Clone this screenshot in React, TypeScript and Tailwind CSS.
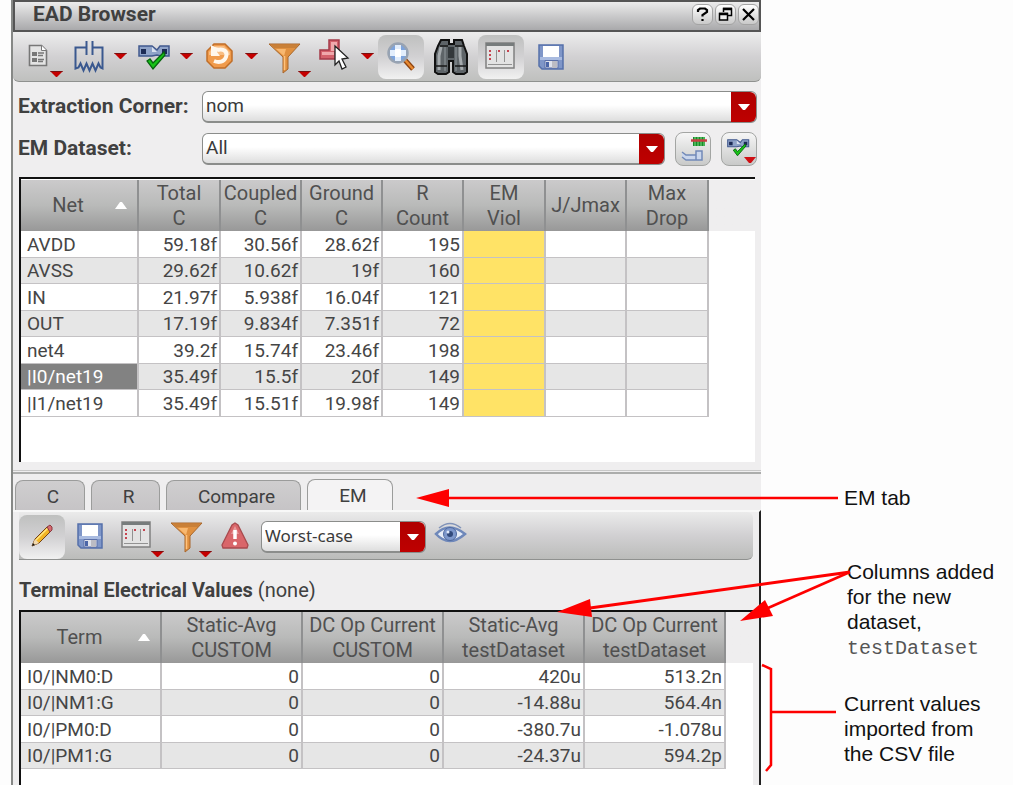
import React from "react";

type IconProps = { w: number; children: React.ReactNode };

function Glyph({ w, children }: IconProps) {
  return (
    <svg width={w} height={44} viewBox={`0 0 ${w} 44`} aria-hidden="true">
      {children}
    </svg>
  );
}

function Caret({ x, y }: { x: number; y: number }) {
  return (
    <g>
      <path d={`M${x} ${y}h13l-6 6h-1z`} fill="#c40000" />
      <path d={`M${x} ${y}h13l-1 1h-11z`} fill="#7a1010" />
    </g>
  );
}

function Floppy({ x, y }: { x: number; y: number }) {
  return (
    <g transform={`translate(${x} ${y})`}>
      <path d="M1 1h24v24h-21l-3-3z" fill="#7f96c8" stroke="#5670aa" strokeWidth="1.500" />
      <path d="M5 2h16v11h-16z" fill="#fff" />
      <path d="M2 13h22v3h-22z" fill="#a9bbe0" />
      <path d="M7 16.500h13v7.500h-13z" fill="#dfe2ec" stroke="#5c70a8" />
      <path d="M8 18h3v5h-3z" fill="#4b66a8" />
      <path d="M14 17h5v7h-5z" fill="#bcbcc4" />
    </g>
  );
}

function Funnel({ x, y }: { x: number; y: number }) {
  return (
    <g transform={`translate(${x} ${y})`}>
      <path d="M0 1h31l-12 13v12l-5 4v-16z" fill="#e0903f" stroke="#a8672c" />
      <path d="M2 2h27l-2 3h-22z" fill="#c98038" />
      <path d="M7 6h10l-2 7z" fill="#f8b870" />
      <path d="M15.500 13v14" stroke="#ffc27c" strokeWidth="1.500" />
    </g>
  );
}

function FormWindow({ x, y }: { x: number; y: number }) {
  return (
    <g transform={`translate(${x} ${y})`}>
      <rect x="1" y="1" width="28" height="25" fill="#e3e3e3" stroke="#808080" strokeWidth="1.5" />
      <path d="M1 2.500h28" stroke="#777c7c" strokeWidth="3" />
      <path d="M11.500 8v12M19.500 8v12M3 22.500h24" stroke="#929292" fill="none" />
      <path d="M4 8h2v2h-2zM4 12h2v2h-2zM4 16h2v2h-2zM13 8h2v2h-2zM22 8h2v2h-2z" fill="#c64450" />
    </g>
  );
}

function LayoutCheck({ x, y, s }: { x: number; y: number; s: number }) {
  return (
    <g transform={`translate(${x} ${y}) scale(${s})`}>
      <path
        d="M1 1h13l5 4 3-4h9v10h-8l-4-1-5 1h-13z"
        fill="#8fa3c8"
        stroke="#42598e"
        strokeWidth="1.5"
      />
      <path d="M14 2l5 5h-5z" fill="#d9e1f0" />
      <path d="M3 4h5v5h-5zM24 4h5v5h-5z" fill="#1c2b55" />
      <path d="M9 16l3-2 3 4 11-11 1 3-12 14z" fill="#18c218" stroke="#08650f" strokeWidth="1.3" />
    </g>
  );
}

const docIcon = (
  <Glyph w={42}>
    <path d="M5.500 10.500h12l5 5v15h-17z" fill="#e4e4e4" stroke="#777" strokeWidth="1.6" />
    <path d="M17.500 10.500v5h5" fill="#fff" stroke="#777" />
    <path d="M8 17h5v4h-5zM8 23h5v4h-5z" fill="#777" />
    <path d="M14 18h6M14 20.500h5M14 24.500h6M14 26.500h5" stroke="#777" strokeWidth="1.4" />
    <Caret x={26} y={36} />
  </Glyph>
);

const rcIcon = (
  <Glyph w={60}>
    <path
      d="M16.500 6v14M22.500 6v14M16.500 12.500h-11v21l3-1 2-4 3 7 3-7 3 7 3-7 3 7 3-7 2 4 2 1v-21h-10"
      fill="none"
      stroke="#3a588f"
      strokeWidth="2"
    />
    <Caret x={44} y={18} />
  </Glyph>
);

const checkIcon = (
  <Glyph w={62}>
    <LayoutCheck x={4} y={10} s={1} />
    <Caret x={46} y={18} />
  </Glyph>
);

const undoIcon = (
  <Glyph w={60}>
    <path d="M14 9h11l7 7v10l-7 7h-11l-7-7v-10z" fill="#f09b4c" stroke="#c06e28" strokeWidth="1.500" />
    <path d="M15 11h9l6 6v3h-21v-3z" fill="#f8bd82" />
    <path d="M17 15c7-2 11 2 9 7-2 5-7 6-12 4" fill="none" stroke="#fff7ec" strokeWidth="4" />
    <path d="M11 10v11h9l-3-4 2-4-4-1z" fill="#fff7ec" />
    <Caret x={45} y={18} />
  </Glyph>
);

const filterIcon = (
  <Glyph w={48}>
    <Funnel x={5} y={8} />
    <Caret x={34} y={36} />
  </Glyph>
);

const pickIcon = (
  <Glyph w={58}>
    <path d="M13 5h10v19h-19v-9h9z" fill="#d4626c" stroke="#a43a48" strokeWidth="1.500" />
    <path d="M15 7h6v9h-6zM6 17h12v3h-12z" fill="#f0a8ac" />
    <path d="M19 11l13 12-6 1 4 8-4 2-3-8-4 4z" fill="#fff" stroke="#222" strokeWidth="1.300" />
    <Caret x={45} y={18} />
  </Glyph>
);

const zoomIcon = (
  <Glyph w={46}>
    <path d="M26 24l9 10" stroke="#8d4310" strokeWidth="5" />
    <path d="M27 25l8 9" stroke="#e88a32" strokeWidth="2.500" />
    <circle cx="20" cy="18" r="9.500" fill="#7ea4dc" stroke="#98a3b2" strokeWidth="2.500" />
    <path d="M17 10h6v5h5v6h-5v5h-6v-5h-5v-6h5z" fill="#e3eefc" />
    <path d="M17 14h6v8h-6z" fill="#fff" />
  </Glyph>
);

const findIcon = (
  <Glyph w={46}>
    <path
      d="M13 5h8v4h5v-4h8l2 6 3 8v18l-3 2h-8l-3-2v-11h-4v11l-3 2h-8l-3-2v-18l3-8z"
      fill="#5e6468"
      stroke="#111"
      strokeWidth="2"
    />
    <path d="M13 12l-2 9v14M32 12v9l2 14" stroke="#a5aaad" strokeWidth="3" fill="none" />
    <path d="M17 12v24M28 12v24" stroke="#777e82" strokeWidth="2" />
    <path d="M12 11h8M27 11h8M7 31h12M27 31h12" stroke="#191919" strokeWidth="1.300" />
    <path d="M20 12h6v11h-6z" fill="#33383b" />
  </Glyph>
);

const formIcon = (
  <Glyph w={46}>
    <FormWindow x={7} y={7} />
  </Glyph>
);

const saveIcon = (
  <Glyph w={46}>
    <Floppy x={10} y={9} />
  </Glyph>
);

const pencilIcon = (
  <Glyph w={46}>
    <path d="M13 31l3-7 12-12 4 4-12 12z" fill="#f2b526" stroke="#744218" />
    <path d="M17 25l12-12" stroke="#ffe783" strokeWidth="1.500" />
    <path d="M28 12l3-2 2 2v3l-2 2z" fill="#d66a70" stroke="#8b3a40" />
    <path d="M13 31l3-7 4 4z" fill="#f1d9ae" />
    <path d="M13 31l1-3 2 2z" fill="#111" />
  </Glyph>
);

const warnIcon = (
  <Glyph w={36}>
    <path d="M18 8l3 2 10 20-1 3h-24l-1-3 10-20z" fill="#d9666a" stroke="#a84a4e" strokeWidth="1.300" />
    <path d="M18 11l4 8h-8z" fill="#e79a9c" />
    <path d="M18 15v9" stroke="#fff" strokeWidth="3.500" />
    <circle cx="18" cy="28.500" r="2" fill="#fff" />
  </Glyph>
);

const eyeIcon = (
  <Glyph w={40}>
    <path d="M6 19q13-13 29 0-16 14-29 0z" fill="#e6ecf7" stroke="#6f88ba" strokeWidth="2.500" />
    <path d="M9 13q11-9 22 0" fill="none" stroke="#8193b8" strokeWidth="1.500" />
    <circle cx="20" cy="19" r="6.500" fill="#7d97cb" stroke="#4f699f" />
    <circle cx="20" cy="19" r="3" fill="#31497b" />
    <circle cx="18" cy="17" r="1.500" fill="#dfe8fa" />
  </Glyph>
);

function Tool({ label, active, children }: { label: string; active?: boolean; children: React.ReactNode }) {
  return (
    <button
      type="button"
      aria-label={label}
      className={
        active
          ? "shrink-0 rounded-lg bg-linear-to-b from-[#bfc0bf] via-[#d2d1d3] to-[#f1f1f1]"
          : "shrink-0"
      }
    >
      {children}
    </button>
  );
}

function Combo({ id, label, value, className }: { id: string; label: string; value: string; className: string }) {
  return (
    <div className={`relative h-8 ${className}`}>
      <select
        id={id}
        aria-label={label}
        className="h-full w-full appearance-none rounded-md border border-b-2 border-[#8b8d8b] bg-linear-to-b from-white from-45% to-[#dedede] pr-8 pl-[3px] text-[#3a3a3a]"
      >
        <option>{value}</option>
      </select>
      <span className="pointer-events-none absolute top-px right-px bottom-px flex w-[25px] items-center justify-center rounded-r-md bg-linear-to-b from-[#b00000] to-[#be0000]">
        <svg width="12" height="6" viewBox="0 0 12 6" aria-hidden="true">
          <path d="M0 0h12l-5 6h-2z" fill="#fff" />
        </svg>
      </span>
    </div>
  );
}

type Head = { lines: string[]; w: string; sort?: boolean };

function DataTable({
  heads,
  rows,
  selected,
  highlight,
}: {
  heads: Head[];
  rows: string[][];
  selected?: number;
  highlight?: number;
}) {
  return (
    <table className="table-fixed border-separate border-spacing-0 text-[19px] leading-[25px] text-[#454545]">
      <colgroup>
        {heads.map((h, i) => (
          <col key={i} className={h.w} />
        ))}
      </colgroup>
      <thead>
        <tr className="bg-linear-to-b from-[#cbcacb] via-[#b9bab9] to-[#989898]">
          {heads.map((h, i) => (
            <th key={i} scope="col" className="p-0 text-center align-middle text-[20px] font-normal whitespace-nowrap text-[#505050]">
              <div className="flex h-[51px] items-center border-r-2 border-[#8f9091]">
                <span className="flex flex-1 flex-col items-center">
                  {h.lines.map((l) => (
                    <span key={l}>{l}</span>
                  ))}
                </span>
                {h.sort && (
                  <svg className="mr-2.5 shrink-0" width="12" height="7" viewBox="0 0 12 7" aria-hidden="true">
                    <path d="M5 0h2l5 7h-12z" fill="#fff" />
                  </svg>
                )}
              </div>
            </th>
          ))}
        </tr>
      </thead>
      <tbody>
        {rows.map((r, ri) => (
          <tr key={ri} className="odd:h-[27px] odd:bg-white even:h-[26px] even:bg-[#e6e6e6]">
            {r.map((c, ci) => (
              <td
                key={ci}
                className={
                  "border-r-2 border-b border-[#c4c2c4] py-0 whitespace-nowrap " +
                  (ci === 0 ? "pl-1.5 text-left " : "pr-0.5 text-right ") +
                  (ci === 0 && ri === selected ? "bg-[#828282] text-white " : "") +
                  (ci === highlight ? "bg-[#ffe366]" : "")
                }
              >
                {c}
              </td>
            ))}
          </tr>
        ))}
      </tbody>
    </table>
  );
}

const netHeads: Head[] = [
  { lines: ["Net"], w: "w-[118px]", sort: true },
  { lines: ["Total", "C"], w: "w-[82px]" },
  { lines: ["Coupled", "C"], w: "w-[81px]" },
  { lines: ["Ground", "C"], w: "w-[81px]" },
  { lines: ["R", "Count"], w: "w-[81px]" },
  { lines: ["EM", "Viol"], w: "w-[82px]" },
  { lines: ["J/Jmax"], w: "w-[81px]" },
  { lines: ["Max", "Drop"], w: "w-[82px]" },
];

const netRows = [
  ["AVDD", "59.18f", "30.56f", "28.62f", "195", "", "", ""],
  ["AVSS", "29.62f", "10.62f", "19f", "160", "", "", ""],
  ["IN", "21.97f", "5.938f", "16.04f", "121", "", "", ""],
  ["OUT", "17.19f", "9.834f", "7.351f", "72", "", "", ""],
  ["net4", "39.2f", "15.74f", "23.46f", "198", "", "", ""],
  ["|I0/net19", "35.49f", "15.5f", "20f", "149", "", "", ""],
  ["|I1/net19", "35.49f", "15.51f", "19.98f", "149", "", "", ""],
];

const termHeads: Head[] = [
  { lines: ["Term"], w: "w-[141px]", sort: true },
  { lines: ["Static-Avg", "CUSTOM"], w: "w-[141px]" },
  { lines: ["DC Op Current", "CUSTOM"], w: "w-[141px]" },
  { lines: ["Static-Avg", "testDataset"], w: "w-[141px]" },
  { lines: ["DC Op Current", "testDataset"], w: "w-[141px]" },
];

const termRows = [
  ["I0/|NM0:D", "0", "0", "420u", "513.2n"],
  ["I0/|NM1:G", "0", "0", "-14.88u", "564.4n"],
  ["I0/|PM0:D", "0", "0", "-380.7u", "-1.078u"],
  ["I0/|PM1:G", "0", "0", "-24.37u", "594.2p"],
];

function TitleBar() {
  const btn =
    "flex h-[21px] w-[21px] items-center justify-center rounded-md border border-[#a4a4a4] bg-linear-to-b from-white to-[#c9c9c9]";
  return (
    <header className="flex h-8 items-start justify-between border-2 border-[#555] bg-linear-to-b from-[#ececec] to-[#a9a9ab] pl-[18px]">
      <h1 className="text-[21px] leading-6 font-bold text-[#404040]">EAD Browser</h1>
      <div className="flex gap-0.5 pt-0.5">
        <button type="button" aria-label="Help" className={btn}>
          <svg width="15" height="15" viewBox="0 0 15 15" aria-hidden="true">
            <path d="M3 5v-2l2-1.500h5l2 1.500v2l-4.500 3v1.500M7.500 12v2" fill="none" stroke="#000" strokeWidth="2.200" />
          </svg>
        </button>
        <button type="button" aria-label="Restore" className={btn}>
          <svg width="15" height="15" viewBox="0 0 15 15" aria-hidden="true">
            <path d="M5.500 5v-3.500h8v7h-4" fill="none" stroke="#000" strokeWidth="1.500" />
            <path d="M5 2h9" stroke="#000" strokeWidth="2.500" />
            <path d="M1.500 6.500h8v6.500h-8z" fill="#eee" stroke="#000" strokeWidth="1.500" />
            <path d="M1 7h9" stroke="#000" strokeWidth="2.500" />
          </svg>
        </button>
        <button type="button" aria-label="Close" className={btn}>
          <svg width="15" height="15" viewBox="0 0 15 15" aria-hidden="true">
            <path d="M2 2l11 11M13 2l-11 11" stroke="#000" strokeWidth="2.200" />
          </svg>
        </button>
      </div>
    </header>
  );
}

const smallBtn =
  "flex h-[34px] w-9 shrink-0 items-center justify-center rounded-lg border border-[#a3a5a3] bg-linear-to-b from-[#f6f6f6] to-[#c9cac9]";

const tab =
  "flex h-[30px] items-center justify-center rounded-t-lg border border-b-0 border-[#9b9c9b] bg-linear-to-b from-[#cfcecf] to-[#c6c4c6] pt-1 pl-1.5";

const fieldLabel = "w-[184px] shrink-0 text-[21px] font-bold";

export default function App() {
  return (
    <main className="flex min-h-screen bg-[#fdfdfd] pl-[11px] font-['Roboto','Liberation_Sans',sans-serif]">
      <section className="flex min-w-0 flex-1 flex-col border-l-2 border-[#868886] bg-[#efeeef] text-[19px] text-[#404040]">
        <TitleBar />

        <div className="flex h-[50px] items-center gap-1 overflow-hidden rounded-b-md border-b border-[#8f918f] bg-linear-to-b from-[#ededed] via-[#d2d1d3] to-[#bfc0be] pt-0.5 pb-0.5 pl-[11px]">
          <Tool label="Report">{docIcon}</Tool>
          <Tool label="Extract RC">{rcIcon}</Tool>
          <Tool label="Check layout">{checkIcon}</Tool>
          <Tool label="Refresh">{undoIcon}</Tool>
          <Tool label="Filter">{filterIcon}</Tool>
          <Tool label="Probe">{pickIcon}</Tool>
          <Tool label="Zoom" active>{zoomIcon}</Tool>
          <Tool label="Find">{findIcon}</Tool>
          <Tool label="Columns" active>{formIcon}</Tool>
          <Tool label="Save">{saveIcon}</Tool>
        </div>

        <div className="flex flex-col gap-2 pt-2 pr-1 pl-[5px]">
          <div className="flex h-[34px] items-center">
            <label htmlFor="corner" className={fieldLabel}>Extraction Corner:</label>
            <Combo id="corner" label="Extraction Corner" value="nom" className="flex-1" />
          </div>
          <div className="flex h-[34px] items-center">
            <label htmlFor="dataset" className={fieldLabel}>EM Dataset:</label>
            <Combo id="dataset" label="EM Dataset" value="All" className="flex-1" />
            <button type="button" aria-label="Edit dataset" className={`${smallBtn} ml-2.5`}>
              <svg width="30" height="30" viewBox="0 0 30 30" aria-hidden="true">
                <path d="M15 3h12v9h-12z" fill="#168c28" />
                <path d="M17 3v9M20 3v9M23 3v9M26 3v9" stroke="#7cd884" />
                <path d="M13 6.500h16" stroke="#c93e44" strokeWidth="2.500" />
                <path d="M4 18l4 3h10v-4h6v9h-16l-4-3M18 21v5" fill="#cad6ec" stroke="#7189b8" strokeWidth="1.500" />
              </svg>
            </button>
            <button type="button" aria-label="Check dataset" className={`${smallBtn} ml-2.5`}>
              <svg width="34" height="32" viewBox="0 0 34 32" aria-hidden="true">
                <LayoutCheck x={5} y={6} s={0.7} />
                <path d="M22 24h12l-5 6h-2z" fill="#cf0f14" />
              </svg>
            </button>
          </div>
        </div>

        <div className="mx-1.5 mt-[11px] h-[285px] shrink-0 overflow-hidden border-t-2 border-l-2 border-[#111] bg-white pt-px">
          <div className="bg-linear-to-b from-[#efeeef] from-[51px] to-white to-[51px]">
            <DataTable heads={netHeads} rows={netRows} selected={5} highlight={5} />
          </div>
        </div>

        <div className="mt-2 h-1 border-t border-b-2 border-t-[#c8c8c8] border-b-[#acadac]" />

        <div role="tablist" aria-label="Values" className="mt-[5px] flex items-end gap-1.5 pl-0.5">
          <button type="button" role="tab" className={`${tab} w-[70px]`}>C</button>
          <button type="button" role="tab" className={`${tab} w-[69px]`}>R</button>
          <button type="button" role="tab" className={`${tab} w-[135px]`}>Compare</button>
          <button
            type="button"
            role="tab"
            aria-selected="true"
            className="flex h-[31px] w-[86px] items-center justify-center rounded-t-lg border border-b-0 border-[#9b9c9b] bg-[#f4f3f4] pt-0.5 pl-1.5"
          >
            EM
          </button>
        </div>

        <div className="flex flex-1 flex-col border-t-2 border-r-2 border-t-[#f8f8f8] border-r-[#222] pl-1.5">
          <div className="mr-1.5 flex h-[48px] items-center gap-1 rounded-r-md border-b border-[#8f918f] bg-linear-to-b from-[#ebebeb] via-[#d1d0d2] to-[#bbbcba] pt-1 pb-0.5">
            <Tool label="Edit" active>{pencilIcon}</Tool>
            <Tool label="Save values">
              <Glyph w={42}>
                <Floppy x={8} y={8} />
              </Glyph>
            </Tool>
            <Tool label="Value columns">
              <Glyph w={50}>
                <FormWindow x={6} y={6} />
                <Caret x={36} y={36} />
              </Glyph>
            </Tool>
            <Tool label="Filter values">
              <Glyph w={44}>
                <Funnel x={2} y={7} />
                <Caret x={30} y={36} />
              </Glyph>
            </Tool>
            <Tool label="Warnings">{warnIcon}</Tool>
            <Combo id="mode" label="Mode" value="Worst-case" className="ml-1 w-[165px] font-['Noto_Sans','Open_Sans',sans-serif] text-[17px]" />
            <Tool label="View">{eyeIcon}</Tool>
          </div>

          <h2 className="mt-[17px] mb-[7px] h-[26px] text-[20px] leading-[26px] font-bold">
            Terminal Electrical Values <span className="font-normal">(none)</span>
          </h2>

          <div className="mr-1.5 flex-1 overflow-hidden border-t-2 border-l-2 border-[#111] bg-white">
            <div className="bg-linear-to-b from-[#efeeef] from-[51px] to-white to-[51px]">
              <DataTable heads={termHeads} rows={termRows} />
            </div>
          </div>
        </div>
      </section>

      <aside className="relative w-[252px] shrink-0 pl-[83px] font-['Liberation_Sans',sans-serif] text-[21px] leading-[25px] text-[#111]">
        <svg
          className="pointer-events-none absolute top-[480px] -left-[349px]"
          width="450"
          height="300"
          viewBox="412 480 450 300"
          aria-hidden="true"
        >
          <g fill="none" stroke="#fe0000" strokeWidth="2.500">
            <path d="M446 498h392" />
            <path d="M590 608L850 572" strokeWidth="3" />
            <path d="M768 608L850 572" />
            <path d="M762 665l9 4v96l-5 6M771 712h65" />
          </g>
          <path d="M416 498l33-9v18zM557 612l33-13 2 18zM740 621l25-21 8 16z" fill="#fe0000" />
        </svg>
        <p className="pt-[485px]">EM tab</p>
        <p className="pt-[49px] pl-[3px] whitespace-nowrap">
          Columns added
          <br />
          for the new
          <br />
          dataset,
          <br />
          <code className="font-['Liberation_Mono',monospace] text-[20px] text-[#555]">testDataset</code>
        </p>
        <p className="pt-[30px] whitespace-nowrap">
          Current values
          <br />
          imported from
          <br />
          the CSV file
        </p>
      </aside>
    </main>
  );
}
